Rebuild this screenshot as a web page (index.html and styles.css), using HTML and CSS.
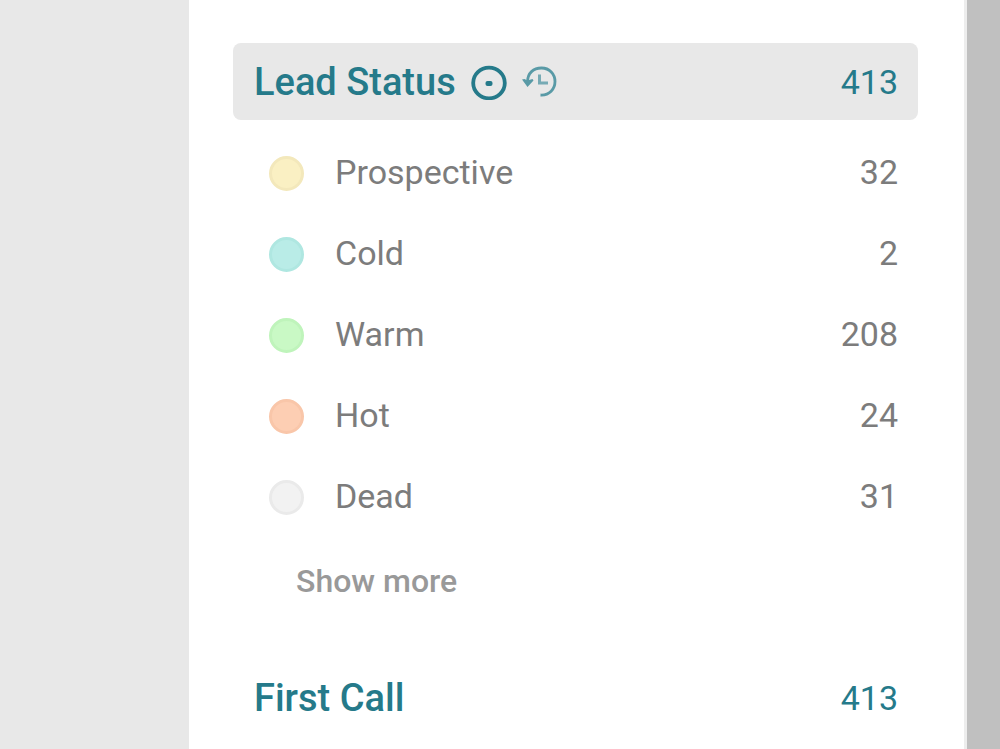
FILE: index.html
```html
<!DOCTYPE html>
<html lang="en">
<head>
<meta charset="utf-8">
<title>Lead Status</title>
<link rel="stylesheet" href="styles.css">
</head>
<body>
<div class="page">
  <main class="panel">
    <section class="group">
      <header class="group-head active">
        <h2 class="group-title">Lead Status</h2>
        <svg class="icon" viewBox="0 0 36 36" aria-hidden="true"><ellipse cx="18" cy="19" rx="15.8" ry="15.3" fill="none" stroke="currentColor" stroke-width="3.8"/><rect x="14.500" y="17" width="7" height="5" rx="2" fill="currentColor"/></svg>
        <svg class="icon history" viewBox="0 0 36 36" aria-hidden="true"><g fill="none" stroke="currentColor" stroke-width="2.800"><path d="M5.500 18C5.500 9 11.500 4 19.500 4S33 10 33 17.500 27.500 31.500 18.500 31"/><path d="M17.500 10.500v8.500h8.500" stroke-width="3" opacity=".8"/></g><path d="M0 15.500L2.500 15l3 1.500L10.500 15l1 1.500-6 6.500z" fill="currentColor"/></svg>
        <span class="count">413</span>
      </header>
      <ul class="list">
        <li class="item"><span class="dot prospective"></span><span class="label">Prospective</span><span class="count">32</span></li>
        <li class="item"><span class="dot cold"></span><span class="label">Cold</span><span class="count">2</span></li>
        <li class="item"><span class="dot warm"></span><span class="label">Warm</span><span class="count">208</span></li>
        <li class="item"><span class="dot hot"></span><span class="label">Hot</span><span class="count">24</span></li>
        <li class="item"><span class="dot dead"></span><span class="label">Dead</span><span class="count">31</span></li>
      </ul>
      <button class="more" type="button">Show more</button>
    </section>
    <section class="group">
      <header class="group-head">
        <h2 class="group-title">First Call</h2>
        <span class="count">413</span>
      </header>
    </section>
  </main>
</div>
</body>
</html>
```
FILE: styles.css
```css
* { box-sizing: border-box; }
body { margin: 0; background: #e8e8e8; color: #7c7c7c; font: 34px/40px "Roboto", sans-serif; }
.page { display: grid; grid-template-columns: 189px 1fr 36px; min-height: 100vh; }
.panel { grid-column: 2; background: #fff; padding: 43px 46px 0 44px; }
.page::after { content: ""; background: #c0c0c0; border-left: 3px solid #ededed; }
.group-head { display: flex; align-items: center; height: 77px; padding: 0 20px 0 21px; border-radius: 8px; color: #257a8a; }
.active { background: #e8e8e8; }
.group-title { margin: 0; font-size: 38px; font-weight: 500; }
.icon { width: 36px; height: 36px; margin-left: 15px; }
.history { color: #599aa6; }
.count { margin-left: auto; }
.list { list-style: none; margin: 0; padding: 13px 20px 0 36px; }
.item { display: flex; align-items: center; height: 81px; }
.item .label, .item .count { padding-bottom: 4px; }
.dot { width: 35px; height: 35px; margin-right: 31px; border: 3px solid; border-radius: 50%; }
.prospective { background: #faf0c3; border-color: #f3e8bb; }
.cold { background: #b9ece7; border-color: #afe7e1; }
.warm { background: #c9f9c5; border-color: #bff4bb; }
.hot { background: #fdceb3; border-color: #f9c6a9; }
.dead { background: #f2f2f2; border-color: #eaeaea; }
.more { display: block; margin: 23px 0 58px 63px; padding: 0; border: 0; background: none; color: #999; font: 500 32px/40px "Roboto", sans-serif; }
```
